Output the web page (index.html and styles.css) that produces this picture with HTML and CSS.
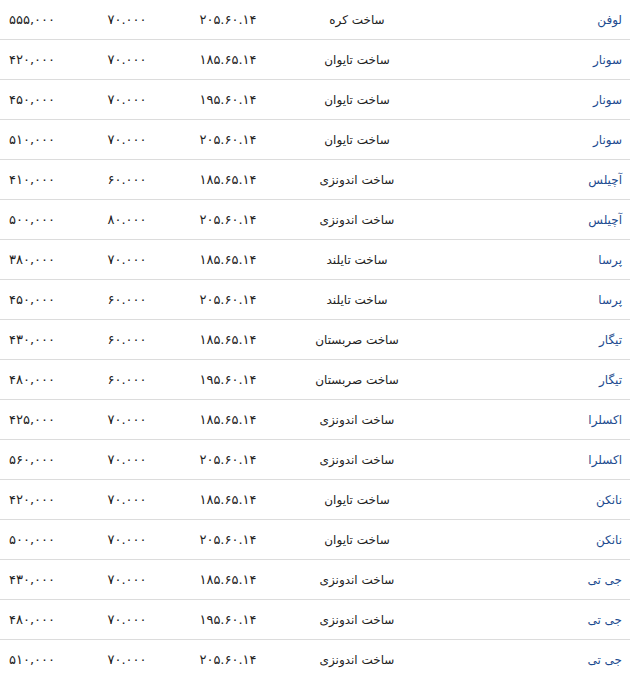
FILE: index.html
```html
<!DOCTYPE html>
<html lang="fa" dir="rtl">
<head>
<meta charset="utf-8">
<link rel="stylesheet" href="styles.css">
</head>
<body>
<div class="table">
  <div class="row"><span class="brand">لوفن</span><span class="origin">ساخت کره</span><span class="num size">۲۰۵.۶۰.۱۴</span><span class="num load">۷۰.۰۰۰</span><span class="num price">۵۵۵,۰۰۰</span></div>
  <div class="row"><span class="brand">سونار</span><span class="origin">ساخت تایوان</span><span class="num size">۱۸۵.۶۵.۱۴</span><span class="num load">۷۰.۰۰۰</span><span class="num price">۴۲۰,۰۰۰</span></div>
  <div class="row"><span class="brand">سونار</span><span class="origin">ساخت تایوان</span><span class="num size">۱۹۵.۶۰.۱۴</span><span class="num load">۷۰.۰۰۰</span><span class="num price">۴۵۰,۰۰۰</span></div>
  <div class="row"><span class="brand">سونار</span><span class="origin">ساخت تایوان</span><span class="num size">۲۰۵.۶۰.۱۴</span><span class="num load">۷۰.۰۰۰</span><span class="num price">۵۱۰,۰۰۰</span></div>
  <div class="row"><span class="brand">آچیلس</span><span class="origin">ساخت اندونزی</span><span class="num size">۱۸۵.۶۵.۱۴</span><span class="num load">۶۰.۰۰۰</span><span class="num price">۴۱۰,۰۰۰</span></div>
  <div class="row"><span class="brand">آچیلس</span><span class="origin">ساخت اندونزی</span><span class="num size">۲۰۵.۶۰.۱۴</span><span class="num load">۸۰.۰۰۰</span><span class="num price">۵۰۰,۰۰۰</span></div>
  <div class="row"><span class="brand">پرسا</span><span class="origin">ساخت تایلند</span><span class="num size">۱۸۵.۶۵.۱۴</span><span class="num load">۷۰.۰۰۰</span><span class="num price">۳۸۰,۰۰۰</span></div>
  <div class="row"><span class="brand">پرسا</span><span class="origin">ساخت تایلند</span><span class="num size">۲۰۵.۶۰.۱۴</span><span class="num load">۶۰.۰۰۰</span><span class="num price">۴۵۰,۰۰۰</span></div>
  <div class="row"><span class="brand">تیگار</span><span class="origin">ساخت صربستان</span><span class="num size">۱۸۵.۶۵.۱۴</span><span class="num load">۶۰.۰۰۰</span><span class="num price">۴۳۰,۰۰۰</span></div>
  <div class="row"><span class="brand">تیگار</span><span class="origin">ساخت صربستان</span><span class="num size">۱۹۵.۶۰.۱۴</span><span class="num load">۶۰.۰۰۰</span><span class="num price">۴۸۰,۰۰۰</span></div>
  <div class="row"><span class="brand">اکسلرا</span><span class="origin">ساخت اندونزی</span><span class="num size">۱۸۵.۶۵.۱۴</span><span class="num load">۷۰.۰۰۰</span><span class="num price">۴۲۵,۰۰۰</span></div>
  <div class="row"><span class="brand">اکسلرا</span><span class="origin">ساخت اندونزی</span><span class="num size">۲۰۵.۶۰.۱۴</span><span class="num load">۷۰.۰۰۰</span><span class="num price">۵۶۰,۰۰۰</span></div>
  <div class="row"><span class="brand">نانکن</span><span class="origin">ساخت تایوان</span><span class="num size">۱۸۵.۶۵.۱۴</span><span class="num load">۷۰.۰۰۰</span><span class="num price">۴۲۰,۰۰۰</span></div>
  <div class="row"><span class="brand">نانکن</span><span class="origin">ساخت تایوان</span><span class="num size">۲۰۵.۶۰.۱۴</span><span class="num load">۷۰.۰۰۰</span><span class="num price">۵۰۰,۰۰۰</span></div>
  <div class="row"><span class="brand">جی تی</span><span class="origin">ساخت اندونزی</span><span class="num size">۱۸۵.۶۵.۱۴</span><span class="num load">۷۰.۰۰۰</span><span class="num price">۴۳۰,۰۰۰</span></div>
  <div class="row"><span class="brand">جی تی</span><span class="origin">ساخت اندونزی</span><span class="num size">۱۹۵.۶۰.۱۴</span><span class="num load">۷۰.۰۰۰</span><span class="num price">۴۸۰,۰۰۰</span></div>
  <div class="row"><span class="brand">جی تی</span><span class="origin">ساخت اندونزی</span><span class="num size">۲۰۵.۶۰.۱۴</span><span class="num load">۷۰.۰۰۰</span><span class="num price">۵۱۰,۰۰۰</span></div>
</div>
</body>
</html>
```

FILE: styles.css
```css
html, body {
  margin: 0;
  padding: 0;
  background: #fff;
}
body {
  font-family: "DejaVu Sans", "Liberation Sans", sans-serif;
  font-size: 12px;
  color: #222;
  direction: rtl;
}
.table {
  width: 630px;
}
.row {
  display: grid;
  grid-template-columns: 182px 182px 76px 126px 64px;
  align-items: center;
  height: 39px;
  border-bottom: 1px solid #dcdcdc;
}
.brand {
  color: #1d4b8f;
  padding-right: 8px;
  text-align: right;
}
.origin {
  text-align: center;
}
.num {
  font-size: 13px;
  text-align: center;
  direction: ltr;
  unicode-bidi: isolate;
}
```
